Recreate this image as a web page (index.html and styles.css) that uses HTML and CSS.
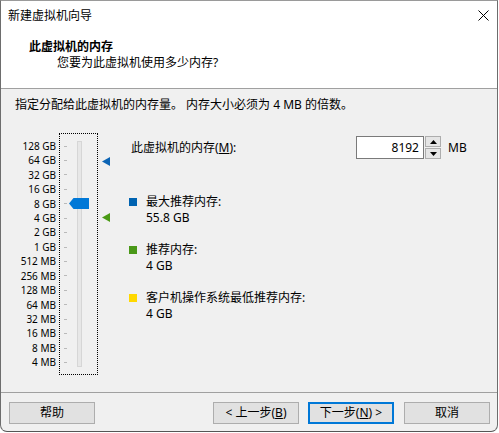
FILE: index.html
```html
<!DOCTYPE html>
<html>
<head>
<meta charset="utf-8">
<link rel="stylesheet" href="styles.css">
</head>
<body>
<div class="window">
  <div class="titlebar">
    <span class="title">新建虚拟机向导</span>
    <svg class="close" width="11" height="11" viewBox="0 0 11 11"><path d="M0.5 0.5L10.5 10.5M10.5 0.5L0.5 10.5" stroke="#000" stroke-width="1" fill="none"/></svg>
  </div>
  <div class="header">
    <div class="h-title">此虚拟机的内存</div>
    <div class="h-sub">您要为此虚拟机使用多少内存?</div>
  </div>
  <div class="content">
    <div class="intro">指定分配给此虚拟机的内存量。 内存大小必须为 4 MB 的倍数。</div>
    <div class="main">
      <div class="scale">
        <div>128 GB</div><div>64 GB</div><div>32 GB</div><div>16 GB</div>
        <div>8 GB</div><div>4 GB</div><div>2 GB</div><div>1 GB</div>
        <div>512 MB</div><div>256 MB</div><div>128 MB</div><div>64 MB</div>
        <div>32 MB</div><div>16 MB</div><div>8 MB</div><div>4 MB</div>
      </div>
      <div class="slider">
        <div class="ticks">
          <span></span><span></span><span></span><span></span>
          <span></span><span></span><span></span><span></span>
          <span></span><span></span><span></span><span></span>
          <span></span><span></span><span></span><span></span>
        </div>
        <div class="track"></div>
        <svg class="thumb" width="20" height="11" viewBox="0 0 20 11"><polygon points="0,5.5 4.5,0 20,0 20,11 4.5,11" fill="#0078d7"/></svg>
      </div>
      <div class="markers">
        <svg class="mark mark-max" width="8" height="9" viewBox="0 0 8 9"><polygon points="0,4.5 8,0 8,9" fill="#0c64b4"/></svg>
        <svg class="mark mark-rec" width="8" height="9" viewBox="0 0 8 9"><polygon points="0,4.5 8,0 8,9" fill="#4a9a14"/></svg>
      </div>
      <div class="panel">
        <div class="mem-row">
          <span class="mem-label">此虚拟机的内存(<u>M</u>):</span>
          <div class="num">8192</div>
          <div class="spin">
            <div class="spin-btn"><svg width="7" height="4" viewBox="0 0 7 4"><polygon points="0,4 3.5,0 7,4" fill="#000"/></svg></div>
            <div class="spin-btn"><svg width="7" height="4" viewBox="0 0 7 4"><polygon points="0,0 7,0 3.5,4" fill="#000"/></svg></div>
          </div>
          <span class="mb">MB</span>
        </div>
        <div class="legend">
          <div class="item"><span class="sq sq-blue"></span><span>最大推荐内存:</span><span class="val">55.8 GB</span></div>
          <div class="item"><span class="sq sq-green"></span><span>推荐内存:</span><span class="val">4 GB</span></div>
          <div class="item"><span class="sq sq-yellow"></span><span>客户机操作系统最低推荐内存:</span><span class="val">4 GB</span></div>
        </div>
      </div>
    </div>
  </div>
  <div class="footer">
    <button class="btn">帮助</button>
    <div class="spacer"></div>
    <button class="btn">&lt; 上一步(<u>B</u>)</button>
    <button class="btn btn-default">下一步(<u>N</u>) &gt;</button>
    <button class="btn btn-cancel">取消</button>
  </div>
</div>
</body>
</html>
```

FILE: styles.css
```css
* { box-sizing: border-box; }
html, body { margin: 0; padding: 0; background: #ffffff; }
body {
  font-family: "Noto Sans", "Noto Sans CJK SC", sans-serif;
  font-size: 12px;
  color: #000;
}
.window {
  width: 498px;
  height: 432px;
  border: 1px solid #6d6d6d;
  border-top-color: #9a9a9a;
  border-bottom-color: #555;
  border-radius: 0 0 7px 7px;
  background: #f0f0f0;
  display: flex;
  flex-direction: column;
  overflow: hidden;
}
.titlebar {
  height: 29px;
  background: #fff;
  display: flex;
  align-items: center;
  justify-content: space-between;
  padding: 0 8px 0 7px;
  flex: none;
}
.title { line-height: 16px; }
.close { display: block; }
.header {
  height: 59px;
  background: #fff;
  border-bottom: 1px solid #a0a0a0;
  padding-top: 9px;
  flex: none;
}
.h-title { font-weight: bold; line-height: 16px; padding-left: 28px; }
.h-sub { line-height: 16px; padding-left: 56px; }
.content {
  flex: 1;
  padding-top: 8px;
}
.intro { line-height: 16px; padding-left: 14px; }
.main {
  margin-top: 20px;
  display: flex;
  align-items: flex-start;
}
.scale {
  width: 55px;
  padding-top: 5.8px;
  font-size: 10px;
  text-align: right;
  flex: none;
}
.scale div { height: 14.45px; line-height: 14.45px; }
.slider {
  margin-left: 3px;
  width: 39px;
  height: 242px;
  border: 1px dotted #000;
  position: relative;
  display: flex;
  align-items: flex-start;
  flex: none;
}
.ticks {
  margin-left: 4px;
  padding-top: 4.8px;
  display: flex;
  flex-direction: column;
  width: 3px;
}
.ticks span {
  height: 14.45px;
  display: flex;
  align-items: center;
}
.ticks span::before {
  content: "";
  width: 3px;
  height: 1px;
  background: #b9b9b9;
}
.track {
  margin-left: 10px;
  margin-top: 6.7px;
  width: 5px;
  height: 226px;
  background: #e7e7e7;
  border: 1px solid #d6d6d6;
}
.thumb {
  position: absolute;
  left: 9px;
  top: 64px;
  display: block;
}
.markers {
  width: 31px;
  height: 242px;
  position: relative;
  flex: none;
}
.mark { position: absolute; left: 4px; display: block; }
.mark-max { top: 24px; }
.mark-rec { top: 80px; }
.panel {
  display: flex;
  flex-direction: column;
}
.mem-row {
  margin-top: 3px;
  height: 23px;
  display: flex;
  align-items: center;
}
.mem-label { margin-left: 2px; width: 225px; line-height: 16px; }
.num {
  width: 68px;
  height: 23px;
  border: 1px solid #7a7a7a;
  background: #fff;
  text-align: right;
  padding-right: 4px;
  line-height: 21px;
}
.spin {
  width: 17px;
  height: 23px;
  display: flex;
  flex-direction: column;
  justify-content: space-between;
  padding: 0 0 0 1px;
}
.spin-btn {
  height: 11px;
  border: 1px solid #adadad;
  background: #e5e5e5;
  display: flex;
  align-items: center;
  justify-content: center;
}
.spin-btn svg { display: block; }
.mb { margin-left: 7px; line-height: 16px; }
.legend {
  margin-top: 35px;
  display: flex;
  flex-direction: column;
  gap: 16px;
}
.item {
  display: grid;
  grid-template-columns: 8px auto;
  column-gap: 9px;
  line-height: 16px;
}
.item .val { grid-column: 2; }
.sq { width: 8px; height: 8px; align-self: center; }
.sq-blue { background: #0063b1; }
.sq-green { background: #4a9818; }
.sq-yellow { background: #ffd800; }
.footer {
  height: 39px;
  border-top: 1px solid #a0a0a0;
  padding: 9px 7px 0 8px;
  display: flex;
  align-items: flex-start;
  flex: none;
}
.spacer { flex: 1; }
.btn {
  width: 86px;
  height: 22px;
  border: 1px solid #adadad;
  background: #e1e1e1;
  font-family: "Noto Sans", "Noto Sans CJK SC", sans-serif;
  font-size: 12px;
  color: #000;
  padding: 0;
  margin: 0;
  line-height: 20px;
}
.btn-default {
  margin-left: 9px;
  border: 2px solid #0078d7;
  line-height: 18px;
}
.btn-cancel { margin-left: 10px; }
```
